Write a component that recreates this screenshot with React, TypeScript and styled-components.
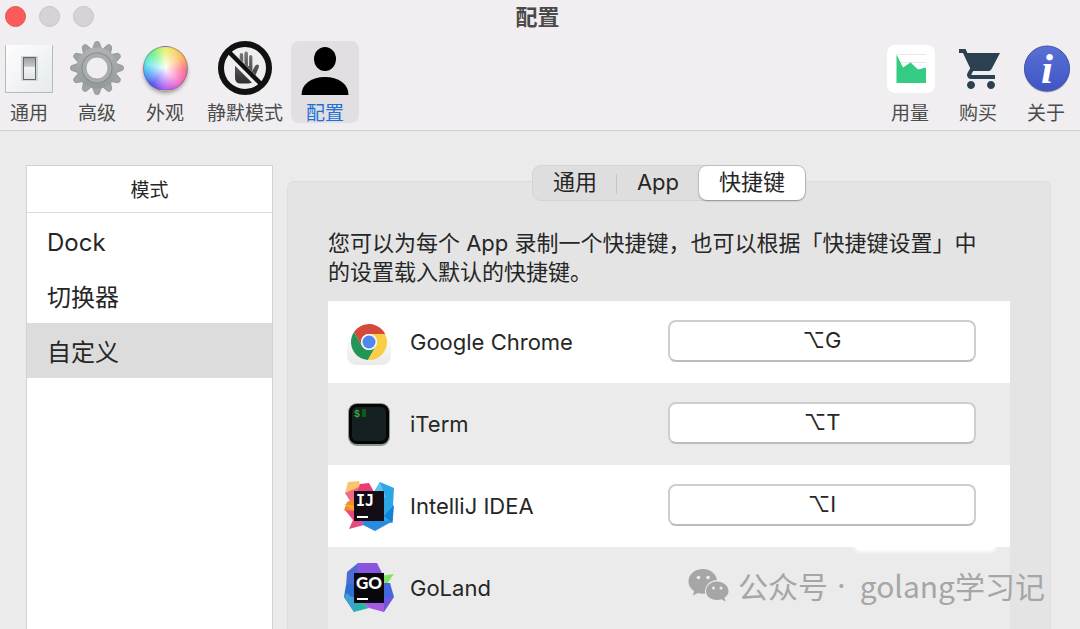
import React, { useState } from "react";
import styled, { createGlobalStyle, css } from "styled-components";

const GlobalStyle = createGlobalStyle`
  * { box-sizing: border-box; }
  body {
    margin: 0;
    background: #ebebeb;
    color: #262626;
    font-family: Inter, "Noto Sans CJK SC", sans-serif;
  }
  button, input { font: inherit; color: inherit; }
`;

const Window = styled.div`
  position: relative;
  display: flex;
  flex-direction: column;
  min-height: 100vh;
  overflow: hidden;
`;

const Header = styled.header`
  background: #f0eef0;
  border-bottom: 1px solid #d0ced0;
  padding-bottom: 7px;
`;

const TitleBar = styled.div`
  display: grid;
  grid-template-columns: 1fr auto 1fr;
  align-items: center;
  height: 33px;
  margin-bottom: 8px;
  padding: 0 10px 0 5px;
`;

const Lights = styled.div`
  display: flex;
  gap: 13px;
`;

const Light = styled.button<{ $active?: boolean }>`
  width: 21px;
  height: 21px;
  padding: 0;
  border-radius: 50%;
  border: 1px solid ${(p) => (p.$active ? "#e2554f" : "#c6c4c6")};
  background: ${(p) => (p.$active ? "#fc5b57" : "#d5d3d5")};
`;

const Title = styled.h1`
  margin: 0;
  font-size: 22px;
  line-height: 32px;
  font-weight: 600;
  color: #4a4a4a;
`;

const Toolbar = styled.nav`
  display: flex;
  justify-content: space-between;
  margin-left: -5px;
`;

const ToolGroup = styled.div`
  display: flex;
`;

const Tool = styled.button<{ $wide?: boolean; $active?: boolean }>`
  display: flex;
  flex-direction: column;
  align-items: center;
  gap: 10px;
  width: ${(p) => (p.$wide ? 92 : 68)}px;
  padding: 0;
  border: 0;
  border-radius: 8px;
  background: ${(p) => (p.$active ? "#e1dfe1" : "transparent")};
  color: ${(p) => (p.$active ? "#1f6fd6" : "#4c4c4c")};
  font-size: 19px;
  line-height: 18px;
  white-space: nowrap;
`;

const ToolIcon = styled.span`
  display: grid;
  place-items: center;
  width: 54px;
  height: 54px;
`;

const ColorBall = styled.span`
  width: 45px;
  height: 45px;
  border-radius: 50%;
  border: 1px solid rgba(90, 90, 120, 0.45);
  background:
    radial-gradient(circle, rgba(255, 255, 255, 0.95) 0%, rgba(255, 255, 255, 0.5) 35%, rgba(255, 255, 255, 0) 75%),
    conic-gradient(#e8f060, #ffb04e 55deg, #ff5c78 95deg, #f25cc8 140deg, #a04cf0 185deg, #4444ee 220deg, #3c9cf8 255deg, #50e8e0 285deg, #5cf080 320deg, #e8f060);
  box-shadow: 0 3px 4px -1px rgba(0, 0, 0, 0.4);
`;

const Main = styled.main`
  flex: 1;
  display: flex;
  gap: 14px;
  padding: 34px 29px 0 26px;
`;

const Sidebar = styled.aside`
  flex: 0 0 247px;
  background: #fff;
  border: 1px solid #d3d3d3;
  border-bottom: 0;
`;

const SidebarTitle = styled.h2`
  margin: 0;
  padding-top: 4px;
  border-bottom: 1px solid #dcdcdc;
  font-size: 19px;
  line-height: 42px;
  font-weight: 400;
  text-align: center;
`;

const ModeButton = styled.button<{ $active?: boolean }>`
  display: block;
  width: 100%;
  height: 55px;
  padding: 4px 20px 0;
  border: 0;
  background: ${(p) => (p.$active ? "#dcdcdc" : "transparent")};
  font-size: 24px;
  line-height: 50px;
  text-align: left;
`;

const Content = styled.section`
  flex: 1;
  min-width: 0;
  display: flex;
  flex-direction: column;
  align-items: stretch;
`;

const Segments = styled.div`
  z-index: 1;
  align-self: center;
  display: flex;
  margin-bottom: -20px;
  border: 1px solid #d4d4d4;
  border-radius: 9px;
  background: #dedede;
`;

const Segment = styled.button<{ $active?: boolean; $divided?: boolean }>`
  position: relative;
  height: 34px;
  padding: 0 20px 2px;
  border: 0;
  border-radius: 8px;
  background: transparent;
  font-size: 22px;
  line-height: 32px;
  ${(p) =>
    p.$active &&
    css`
      background: #fff;
      box-shadow: 0 0 1px 1px rgba(0, 0, 0, 0.1), 0 1px 2px rgba(0, 0, 0, 0.25);
    `}
  ${(p) =>
    p.$divided &&
    css`
      &::after {
        content: "";
        position: absolute;
        top: 8px;
        right: 0;
        width: 1px;
        height: 20px;
        background: #c4c4c4;
      }
    `}
`;

const Panel = styled.div`
  flex: 1;
  padding: 47px 40px 0;
  border: 1px solid #dcdcdc;
  border-bottom: 0;
  border-radius: 7px 7px 0 0;
  background: #e4e4e4;
`;

const Hint = styled.p`
  margin: 0 0 14px;
  padding-right: 16px;
  font-size: 22px;
  line-height: 29px;
`;

const AppList = styled.ul`
  margin: 0;
  padding: 0;
  list-style: none;
`;

const AppRow = styled.li<{ $smudge?: boolean }>`
  position: relative;
  display: flex;
  align-items: center;
  gap: 16px;
  height: 82px;
  padding: 0 34px 0 16px;
  background: #fff;
  &:nth-child(even) { background: #ebebeb; }
  ${(p) =>
    p.$smudge &&
    css`
      &::before {
        content: "";
        position: absolute;
        top: -5px;
        right: 16px;
        width: 138px;
        height: 8px;
        border-radius: 4px;
        background: #fff;
        box-shadow: 0 0 4px 2px #fff;
      }
    `}
`;

const AppName = styled.label`
  flex: 1;
  font-size: 22px;
  line-height: 30px;
`;

const Shortcut = styled.input`
  flex: 0 0 308px;
  width: 308px;
  height: 42px;
  margin-bottom: 2px;
  padding: 0 8px 2px;
  border: 2px solid #cecece;
  border-bottom-color: #bcbcbc;
  border-radius: 8px;
  background: #fff;
  font-family: Inter, "DejaVu Sans", sans-serif;
  font-size: 22px;
  text-align: center;
`;

const Watermark = styled.div`
  position: absolute;
  right: 35px;
  bottom: 22px;
  display: flex;
  align-items: center;
  gap: 9px;
  color: #a6a6a6;
  font-family: "Noto Sans CJK SC", sans-serif;
  font-size: 30px;
  line-height: 44px;
  white-space: nowrap;
  pointer-events: none;
`;

const Dot = styled.span`
  margin-right: 5px;
  font-family: Inter, sans-serif;
`;

const SwitchIcon = () => (
  <svg width="54" height="54" viewBox="0 0 54 54">
    <defs>
      <linearGradient id="plate" x1="0" y1="0" x2="1" y2="1">
        <stop offset="0" stopColor="#fdfefe" />
        <stop offset="1" stopColor="#e6eaec" />
      </linearGradient>
      <linearGradient id="rocker" x1="0" y1="0" x2="0" y2="1">
        <stop offset="0" stopColor="#98a0a4" />
        <stop offset=".4" stopColor="#c3c8ca" />
        <stop offset=".45" stopColor="#f3f5f5" />
        <stop offset="1" stopColor="#dfe3e4" />
      </linearGradient>
    </defs>
    <rect x="3" y="4" width="48" height="48" rx="1" fill="#b4babc" />
    <rect x="4" y="4" width="46" height="47" fill="url(#plate)" />
    <rect x="19" y="15" width="17" height="25" fill="#d2d6d7" />
    <rect x="21.500" y="16.500" width="12" height="22" fill="url(#rocker)" stroke="#60686c" />
  </svg>
);

const GearIcon = () => (
  <svg width="54" height="54" viewBox="0 0 54 54">
    <defs>
      <linearGradient id="metal" gradientUnits="userSpaceOnUse" x1="0" y1="0" x2="0" y2="54">
        <stop offset="0" stopColor="#b4b8ba" />
        <stop offset="1" stopColor="#909496" />
      </linearGradient>
    </defs>
    <g fill="#a0a4a6" stroke="#8a8e90" strokeWidth=".7">
      {Array.from({ length: 12 }, (_, i) => (
        <path key={i} d="M22 9 L24.500 2 Q24.700 .5 27 .5 Q29.300 .5 29.500 2 L32 9Z" transform={`rotate(${i * 30} 27 27)`} />
      ))}
    </g>
    <circle cx="27" cy="27" r="15.800" fill="none" stroke="url(#metal)" strokeWidth="9.500" />
    <circle cx="27" cy="27" r="15" fill="none" stroke="#888c8e" strokeWidth="1.200" />
    <circle cx="27" cy="27" r="12.800" fill="none" stroke="#a9adaf" strokeWidth="3" />
    <circle cx="27" cy="27" r="11" fill="#f0eef0" stroke="#8c9092" strokeWidth=".7" />
  </svg>
);

const SilentIcon = () => (
  <svg width="54" height="54" viewBox="0 0 54 54">
    <defs>
      <linearGradient id="palm" x1="0" y1="0" x2="0" y2="1">
        <stop offset="0" stopColor="#7c7c7c" />
        <stop offset="1" stopColor="#2e2e2e" />
      </linearGradient>
    </defs>
    <path
      fill="url(#palm)"
      d="M17 21 Q17 15.500 18.800 15.500 Q20.500 15.500 20.500 18 L20.500 26 L21.700 26 L21.700 14 Q21.700 12 23.400 12 Q25.200 12 25.200 14 L25.200 25 L26.400 25 L26.400 12.500 Q26.400 10.500 28.100 10.500 Q29.900 10.500 29.900 12.500 L29.900 25 L31.100 25 L31.100 16 Q31.100 14 32.700 14 Q34.400 14 34.400 16 L34.400 30 L37 25 Q38.500 22.500 40.500 24 Q41.500 25 40.500 27 L35.500 39 Q34 42.500 30 42.500 L23 42.500 Q17 42.500 17 37Z"
    />
    <path d="M9.500 11.500 L42.500 44.500" stroke="#f0eef0" strokeWidth="8" />
    <circle cx="27" cy="27" r="24" fill="none" stroke="#111" strokeWidth="6" />
    <path d="M10 10 L44 44" stroke="#111" strokeWidth="4.500" />
  </svg>
);

const PersonIcon = () => (
  <svg width="54" height="54" viewBox="0 0 54 54">
    <ellipse cx="27" cy="18" rx="11" ry="12" />
    <path d="M3.500 54 Q3.500 46 10 41 Q17 36 27 36 Q37 36 44 41 Q50.500 46 50.500 54Z" />
  </svg>
);

const UsageIcon = () => (
  <svg width="54" height="54" viewBox="0 0 54 54">
    <rect x="4" y="4" width="48" height="48" rx="8" fill="#fff" />
    <path d="M14 13.500H43 M14 21.500H43" stroke="#e8e8e8" />
    <path d="M13.500 13.500 L20 26.500 L27.500 21.500 L35 28.500 L43 26.500 V42 H13.500Z" fill="#34cb82" />
  </svg>
);

const CartIcon = () => (
  <svg width="54" height="54" viewBox="0 0 27 27" fill="#2b4050">
    <path
      transform="translate(3 2)"
      d="M7 18c-1.100 0-2 .9-2 2s.9 2 2 2 2-.9 2-2-.9-2-2-2zM1 2v2h2l3.600 7.600-1.350 2.450C5.100 14.300 5 14.650 5 15c0 1.100.9 2 2 2h12v-2H7.420c-.14 0-.25-.11-.25-.25l.03-.12.9-1.630h7.450c.75 0 1.410-.41 1.750-1.030L21.500 4H5.210l-.94-2H1zm16 16c-1.100 0-2 .9-2 2s.9 2 2 2 2-.9 2-2-.9-2-2-2z"
    />
  </svg>
);

const InfoIcon = () => (
  <svg width="54" height="54" viewBox="0 0 54 54">
    <defs>
      <linearGradient id="info" x1="0" y1="0" x2="0" y2="1">
        <stop offset="0" stopColor="#5a70d4" />
        <stop offset="1" stopColor="#3f55c4" />
      </linearGradient>
    </defs>
    <circle cx="28" cy="28.500" r="23" fill="#a9a9b8" />
    <circle cx="28" cy="27.500" r="22.500" fill="url(#info)" stroke="#4053a6" />
    <text x="28" y="42" textAnchor="middle" fill="#fff" fontFamily="Liberation Serif, serif" fontSize="43" fontStyle="italic" fontWeight="700">
      i
    </text>
  </svg>
);

const ChromeIcon = () => (
  <svg width="50" height="50" viewBox="0 0 50 50">
    <defs>
      <linearGradient id="tile" x1="0" y1="0" x2="0" y2="1">
        <stop offset=".3" stopColor="#fff" />
        <stop offset="1" stopColor="#e9e9e9" />
      </linearGradient>
    </defs>
    <rect x="3" y="4" width="44" height="44" rx="9" fill="url(#tile)" />
    <path fill="#d5493a" d="M41.100 17 A18 18 0 0 0 10 15.100 L18.100 29 A8 8 0 0 1 25 17Z" />
    <path fill="#249556" d="M10 15.100 A18 18 0 0 0 23.900 43 L31.900 29 A8 8 0 0 1 18.100 29Z" />
    <path fill="#fbcd45" d="M23.900 43 A18 18 0 0 0 41.100 17 L25 17 A8 8 0 0 1 31.900 29Z" />
    <circle cx="25" cy="25" r="8" fill="#f5f5f5" />
    <circle cx="25" cy="25" r="6.500" fill="#4f87ea" />
  </svg>
);

const ITermIcon = () => (
  <svg width="50" height="50" viewBox="0 0 50 50">
    <rect x="4" y="4" width="42" height="43" rx="9" fill="#8f9392" />
    <rect x="5" y="5" width="40" height="40" rx="8" fill="#040706" />
    <rect x="8" y="8" width="34" height="34" rx="5" fill="#152023" />
    <text x="10" y="18" fill="#2fae37" fontFamily="Liberation Mono, monospace" fontSize="10" fontWeight="700">
      $
    </text>
    <rect x="18" y="10" width="4" height="8" fill="#14561c" />
  </svg>
);

const IdeaIcon = () => (
  <svg width="50" height="50" viewBox="0 0 50 50">
    <path fill="#fbc56c" d="M4 1 L15 0 L18 12 L9 14 L1 12Z" />
    <path fill="#f06a88" d="M15 6 L1 12 L6 20 L12 20Z" />
    <path fill="#f58a2c" d="M3 21 L12 17 L12 34 L0 29Z" />
    <path fill="#fba93a" d="M0 23 L12 25 L11 30Z" />
    <path fill="#e73c74" d="M16 3 L25 2 L30 11 L12 14Z" />
    <path fill="#e84a80" d="M1 29 L10 30 L20 44 L5 48 L9 39Z" />
    <path fill="#b45ac0" d="M10 38 L26 38 L19 44Z" />
    <path fill="#2ca6e6" d="M36 1 L50 7 L48 42 L38 41 L30 11Z" />
    <path fill="#5cc3ee" d="M36 1 L42 17 L30 11Z" />
    <path fill="#167fd6" d="M50 24 L48.500 42 L40 35Z" />
    <path fill="#2a8ade" d="M20 39 L49 40 L31 50 L19 44Z" />
    <rect x="10" y="10" width="30" height="30" fill="#140c14" />
    <rect x="13" y="35" width="11" height="2" fill="#fff" />
    <text x="12" y="25" fill="#fff" fontFamily="DejaVu Sans Mono, monospace" fontSize="15" fontWeight="700">
      IJ
    </text>
  </svg>
);

const GoLandIcon = () => (
  <svg width="50" height="50" viewBox="0 0 50 50">
    <path fill="#8a55dc" d="M14 0 L33 0 L39 12 L8 14Z" />
    <path fill="#4a6cd4" d="M14 0 L3 9 L2 24 L12 26Z" />
    <path fill="#2d6fd0" d="M2 22 L12 20 L14 42 L0 34Z" />
    <path fill="#28b3a6" d="M0 34 L12 34 L25 45 L10 49Z" />
    <path fill="#3f9fd4" d="M3 30 L12 38 L10 49 L0 34Z" />
    <path fill="#7be65c" d="M36 13 L50 11 L42 22Z" />
    <path fill="#4467dc" d="M40 20 L46 20 L50 34 L40 42Z" />
    <path fill="#7354dc" d="M38 36 L50 34 L40 49 L30 42Z" />
    <path fill="#a55ae2" d="M18 39 L40 39 L40 49 L25 45Z" />
    <rect x="10" y="10" width="30" height="30" fill="#08070d" />
    <rect x="13" y="35" width="11" height="2" fill="#fff" />
    <text x="25" y="26" textAnchor="middle" fill="#fff" fontFamily="Lato, sans-serif" fontSize="17" fontWeight="900">
      GO
    </text>
  </svg>
);

const WeChatIcon = () => (
  <svg width="41" height="34" viewBox="0 0 41 34">
    <path
      fill="#a6a6a6"
      d="M15 1 C6.500 1 .5 6.500 .5 13.500 C.5 17.500 2.500 20.500 6 23 L5 27.500 L10 25 Q12.500 26 17 25.800 C16 17 23 12 29 12 C28 5.500 22 1 15 1Z"
    />
    <path
      fill="#a6a6a6"
      d="M29 13.500 C22.500 13.500 18 18 18 23 C18 28.500 22.500 32 29 32 Q31.500 32 33.500 31.300 L37.500 33.500 L36.500 29.800 Q40.500 27 40.500 23 C40.500 18 35.500 13.500 29 13.500Z"
    />
    <g fill="#ececec">
      <circle cx="10.500" cy="9.500" r="1.800" />
      <circle cx="20" cy="9.500" r="1.800" />
      <circle cx="25.500" cy="20" r="1.500" />
      <circle cx="33" cy="20" r="1.500" />
    </g>
  </svg>
);

const leftTools = [
  { label: "通用", icon: <SwitchIcon /> },
  { label: "高级", icon: <GearIcon /> },
  { label: "外观", icon: <ColorBall /> },
  { label: "静默模式", icon: <SilentIcon />, wide: true },
  { label: "配置", icon: <PersonIcon /> },
];

const rightTools = [
  { label: "用量", icon: <UsageIcon /> },
  { label: "购买", icon: <CartIcon /> },
  { label: "关于", icon: <InfoIcon /> },
];

const modes = ["Dock", "切换器", "自定义"];
const tabs = ["通用", "App", "快捷键"];

const apps = [
  { id: "chrome", name: "Google Chrome", icon: <ChromeIcon />, keys: "⌥G" },
  { id: "iterm", name: "iTerm", icon: <ITermIcon />, keys: "⌥T" },
  { id: "idea", name: "IntelliJ IDEA", icon: <IdeaIcon />, keys: "⌥I" },
  { id: "goland", name: "GoLand", icon: <GoLandIcon />, keys: "" },
];

export default function App() {
  const [tool, setTool] = useState("配置");
  const [mode, setMode] = useState("自定义");
  const [tab, setTab] = useState("快捷键");

  const renderTool = (t: { label: string; icon: React.ReactNode; wide?: boolean }) => (
    <Tool key={t.label} $wide={t.wide} $active={t.label === tool} onClick={() => setTool(t.label)}>
      <ToolIcon>{t.icon}</ToolIcon>
      {t.label}
    </Tool>
  );

  return (
    <Window lang="zh-CN">
      <GlobalStyle />
      <Header>
        <TitleBar>
          <Lights>
            <Light $active aria-label="关闭" />
            <Light aria-label="最小化" />
            <Light aria-label="缩放" />
          </Lights>
          <Title>配置</Title>
        </TitleBar>
        <Toolbar>
          <ToolGroup>{leftTools.map(renderTool)}</ToolGroup>
          <ToolGroup>{rightTools.map(renderTool)}</ToolGroup>
        </Toolbar>
      </Header>
      <Main>
        <Sidebar>
          <SidebarTitle>模式</SidebarTitle>
          {modes.map((m) => (
            <ModeButton key={m} $active={m === mode} onClick={() => setMode(m)}>
              {m}
            </ModeButton>
          ))}
        </Sidebar>
        <Content>
          <Segments>
            {tabs.map((t, i) => (
              <Segment key={t} $active={t === tab} $divided={i === 0} onClick={() => setTab(t)}>
                {t}
              </Segment>
            ))}
          </Segments>
          <Panel>
            <Hint>您可以为每个 App 录制一个快捷键，也可以根据「快捷键设置」中的设置载入默认的快捷键。</Hint>
            <AppList>
              {apps.map((a) => (
                <AppRow key={a.id} $smudge={!a.keys}>
                  {a.icon}
                  <AppName htmlFor={a.keys ? a.id : undefined}>{a.name}</AppName>
                  {a.keys && <Shortcut id={a.id} type="text" readOnly value={a.keys} />}
                </AppRow>
              ))}
            </AppList>
          </Panel>
        </Content>
      </Main>
      <Watermark>
        <WeChatIcon />
        <span>公众号</span>
        <Dot>·</Dot>
        <span>golang学习记</span>
      </Watermark>
    </Window>
  );
}
